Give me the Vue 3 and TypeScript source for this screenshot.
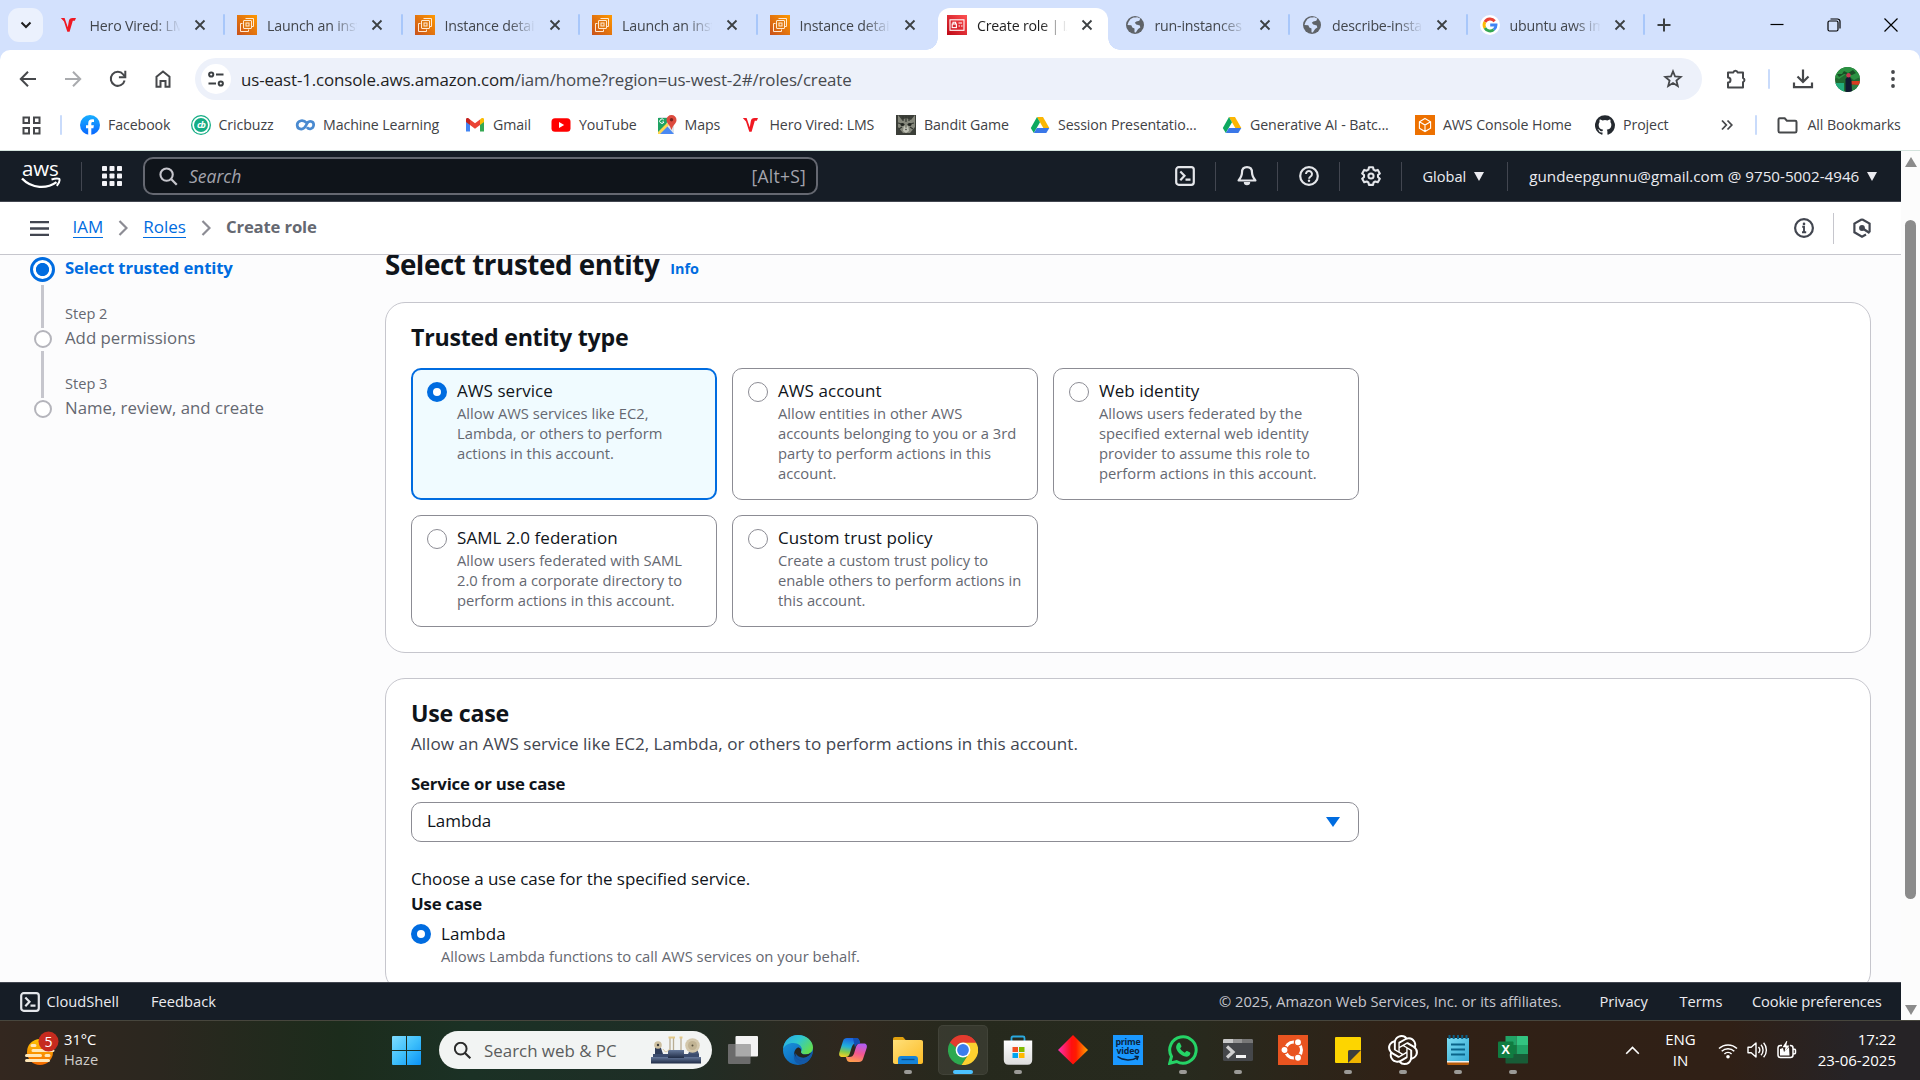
<script setup lang="ts">
interface Tab { icon: string; title: string; active?: boolean; sep?: boolean }
interface Bookmark { icon: string; label: string; width: number }
interface Entity { title: string; text: string; selected?: boolean }
interface App { id: string; open?: boolean; active?: boolean }

const tabs: Tab[] = [
  { icon: 'vired', title: 'Hero Vired: LMS', sep: true },
  { icon: 'ec2', title: 'Launch an instance', sep: true },
  { icon: 'ec2', title: 'Instance details', sep: true },
  { icon: 'ec2', title: 'Launch an instance', sep: true },
  { icon: 'ec2', title: 'Instance details' },
  { icon: 'iam', title: 'Create role | IAM', active: true },
  { icon: 'globe', title: 'run-instances —', sep: true },
  { icon: 'globe', title: 'describe-instances', sep: true },
  { icon: 'google', title: 'ubuntu aws image', sep: true },
]

const bookmarks: Bookmark[] = [
  { icon: 'facebook', label: 'Facebook', width: 110.5 },
  { icon: 'cricbuzz', label: 'Cricbuzz', width: 104.5 },
  { icon: 'ml', label: 'Machine Learning', width: 170 },
  { icon: 'gmail', label: 'Gmail', width: 86 },
  { icon: 'youtube', label: 'YouTube', width: 105.5 },
  { icon: 'maps', label: 'Maps', width: 85 },
  { icon: 'vired', label: 'Hero Vired: LMS', width: 154.5 },
  { icon: 'cat', label: 'Bandit Game', width: 134 },
  { icon: 'drive', label: 'Session Presentatio...', width: 192 },
  { icon: 'drive', label: 'Generative AI - Batc...', width: 193 },
  { icon: 'awscube', label: 'AWS Console Home', width: 180 },
  { icon: 'github', label: 'Project', width: 122 },
]

const entities: Entity[] = [
  { title: 'AWS service', text: 'Allow AWS services like EC2, Lambda, or others to perform actions in this account.', selected: true },
  { title: 'AWS account', text: 'Allow entities in other AWS accounts belonging to you or a 3rd party to perform actions in this account.' },
  { title: 'Web identity', text: 'Allows users federated by the specified external web identity provider to assume this role to perform actions in this account.' },
  { title: 'SAML 2.0 federation', text: 'Allow users federated with SAML 2.0 from a corporate directory to perform actions in this account.' },
  { title: 'Custom trust policy', text: 'Create a custom trust policy to enable others to perform actions in this account.' },
]

const apps: App[] = [
  { id: 'taskview' }, { id: 'edge' }, { id: 'copilot' }, { id: 'explorer', open: true },
  { id: 'chrome', active: true }, { id: 'store', open: true }, { id: 'diamond' }, { id: 'prime' },
  { id: 'whatsapp', open: true }, { id: 'terminal', open: true }, { id: 'ubuntu' }, { id: 'sticky', open: true },
  { id: 'chatgpt', open: true }, { id: 'notepad', open: true }, { id: 'excel', open: true },
]
</script>

<template>
  <svg class="defs" width="0" height="0" aria-hidden="true">
    <defs>
      <linearGradient id="gEc2" x1="0" y1="1" x2="1" y2="0"><stop offset="0" stop-color="#c8511b" /><stop offset="1" stop-color="#ff9900" /></linearGradient>
      <linearGradient id="gIam" x1="0" y1="1" x2="1" y2="0"><stop offset="0" stop-color="#bd0816" /><stop offset="1" stop-color="#ff5252" /></linearGradient>
      <linearGradient id="gFb" x1="0" y1="0" x2="0" y2="1"><stop offset="0" stop-color="#19afff" /><stop offset="1" stop-color="#0866ff" /></linearGradient>
      <linearGradient id="gWin" x1="0" y1="0" x2="1" y2="1"><stop offset="0" stop-color="#7fdcff" /><stop offset=".5" stop-color="#3fc0fb" /><stop offset="1" stop-color="#0a92f5" /></linearGradient>
      <linearGradient id="gHaze" x1="0" y1="0" x2="0" y2="1"><stop offset="0" stop-color="#ffc400" /><stop offset="1" stop-color="#f56a00" /></linearGradient>
      <linearGradient id="gEdgeTop" x1="0" y1="0" x2="1" y2=".6"><stop offset="0" stop-color="#2aa5e8" /><stop offset=".5" stop-color="#2fc7d0" /><stop offset="1" stop-color="#62dd52" /></linearGradient>
      <linearGradient id="gEdgeLow" x1="0" y1="0" x2=".8" y2="1"><stop offset="0" stop-color="#1b9de2" /><stop offset="1" stop-color="#0b5cb4" /></linearGradient>
      <linearGradient id="gCopL" x1=".5" y1="0" x2=".3" y2="1"><stop offset="0" stop-color="#1b62e0" /><stop offset=".45" stop-color="#21b0dc" /><stop offset=".75" stop-color="#86c94a" /><stop offset="1" stop-color="#f2cf28" /></linearGradient>
      <linearGradient id="gCopR" x1=".6" y1="0" x2=".3" y2="1"><stop offset="0" stop-color="#b45cf0" /><stop offset=".5" stop-color="#f4578f" /><stop offset="1" stop-color="#ffa04a" /></linearGradient>
      <linearGradient id="gFolder" x1="0" y1="0" x2="1" y2="1"><stop offset="0" stop-color="#ffe07a" /><stop offset="1" stop-color="#fcbb25" /></linearGradient>
      <linearGradient id="gDia" x1="0" y1="0" x2="1" y2="0"><stop offset="0" stop-color="#ff2fb4" /><stop offset=".45" stop-color="#ff1010" /><stop offset=".6" stop-color="#ff1a00" /><stop offset="1" stop-color="#ffa400" /></linearGradient>
      <linearGradient id="gStore" x1="0" y1="0" x2="0" y2="1"><stop offset="0" stop-color="#ffffff" /><stop offset="1" stop-color="#dcdcdc" /></linearGradient>
      <linearGradient id="gNote" x1="0" y1="0" x2="1" y2="1"><stop offset="0" stop-color="#7adcf2" /><stop offset="1" stop-color="#35a9d3" /></linearGradient>
      <linearGradient id="gMetal" x1="0" y1="0" x2="0" y2="1"><stop offset="0" stop-color="#65789a" /><stop offset="1" stop-color="#202c46" /></linearGradient>

      <symbol id="vired" viewBox="0 0 20 20"><path d="M.8 3h3.800l3.200 9.200L8.800 6.200C9.200 4 10.300 3 12.600 3H16l-1.200 2.700h-2L9.600 16.800H7.300L4 6.400z" fill="#f01822" /></symbol>
      <symbol id="ec2" viewBox="0 0 20 20"><rect width="20" height="20" fill="url(#gEc2)" /><g fill="none" stroke="#ffe9d2" stroke-width="1"><path d="M8.500 3.500h8v8h-2M5.500 8.500h-2v8h8v-2" /><rect x="6.500" y="5.500" width="8" height="8" rx=".4" fill="#e07a12" /><rect x="9" y="8" width="3" height="3" /></g></symbol>
      <symbol id="iam" viewBox="0 0 20 20"><rect width="20" height="20" fill="url(#gIam)" /><g fill="none" stroke="#fff" stroke-width="1.100"><rect x="3" y="4.800" width="14" height="10.500" /><rect x="5.200" y="9" width="4.200" height="3.600" /><path d="M6 9V7.200h2.600V9M11.500 8h3.500M11.500 11h1.500M14 11h1.500" /></g></symbol>
      <symbol id="globe" viewBox="0 0 20 20"><circle cx="10" cy="10" r="9" fill="#5f6368" /><path d="M8.500 2.500 5.500 4 3.500 7l-1 3 3.800.3 1 2.200 2.200 1v3.800l1.300.2 2.300-3.400 2.200-1.600-.5-2.100-3.500-.8-1.500-1.800 1.500-1.300 3-.8 1-2.200-3-1.300-2 .4z" fill="#d3e1fd" /></symbol>
      <symbol id="google" viewBox="0 0 20 20"><circle cx="10" cy="10" r="10" fill="#fff" /><g fill="none" stroke-width="2.900"><path d="M14.700 6.200A6 6 0 0 0 4.900 7" stroke="#ea4335" /><path d="M4.900 7a6 6 0 0 0 0 6" stroke="#fbbc04" /><path d="M4.900 13a6 6 0 0 0 8.900 1.700" stroke="#34a853" /><path d="M13.800 14.700A6 6 0 0 0 16 10H10.200" stroke="#4285f4" /></g></symbol>
      <symbol id="facebook" viewBox="0 0 20 20"><circle cx="10" cy="10" r="10" fill="url(#gFb)" /><path d="M8.200 19.900v-6.600H6V10.200h2.200V8.500c0-3 1.500-4.300 4-4.300.7 0 1.400.1 1.800.2v2.700h-1.300c-1 0-1.400.5-1.400 1.500v1.600h2.600l-.5 3.100h-2.100v6.600z" fill="#fff" /></symbol>
      <symbol id="cricbuzz" viewBox="0 0 20 20"><circle cx="10" cy="10" r="10" fill="#15ad85" /><circle cx="10" cy="10" r="8.700" fill="#fff" /><circle cx="10" cy="10" r="7" fill="#15ad85" /><text x="10" y="13.200" text-anchor="middle" font-family="Open Sans, sans-serif" font-size="9" font-weight="700" font-style="italic" letter-spacing="-.8" fill="#fff">cb</text></symbol>
      <symbol id="ml" viewBox="0 0 20 20"><path d="M11.800 8.200C10.500 6.700 8.500 5.300 6 5.800c-5.600 1.200-4.700 8.500.4 8.300 3.700-.2 4.200-3 5.600-5.500 2-3.800 7.200-2.300 6.600 1.800-.5 3.600-4.600 4.600-6.700 1.800" fill="none" stroke="#4a8ad0" stroke-width="2.700" /></symbol>
      <symbol id="gmail" viewBox="0 0 20 20"><path d="M1 16.500V6l4 3v7.500z" fill="#4285f4" /><path d="M15 16.500V9l4-3v10.500z" fill="#34a853" /><path d="M1 7V4.500C1 3 2.800 2.700 3.800 3.500L5 4.500v5.600z" fill="#c5221f" /><path d="M5 10.100V4.500l5 3.800 5-3.800v5.600l-5 3.700z" fill="#ea4335" /><path d="M15 10.100V4.500l1.200-1C17.200 2.700 19 3 19 4.500V7z" fill="#fbbc04" /></symbol>
      <symbol id="youtube" viewBox="0 0 20 20"><rect x=".5" y="3.300" width="19" height="13.400" rx="3.500" fill="#f00" /><path d="M8 7v6l5.200-3z" fill="#fff" /></symbol>
      <symbol id="maps" viewBox="0 0 20 20"><rect x="1" y="2" width="16" height="17" rx="1.500" fill="#dfe3e8" /><path d="M1 3h10l-2 8-8 7z" fill="#1ea362" /><path d="m2 19 8-8 7 8z" fill="#4a89f3" /><path d="m1 17 9-9 2 2-9 9H1z" fill="#ffd54f" /><path d="M14.500 0a5 5 0 0 1 5 5c0 3.500-3.300 4.500-5 10-1.700-5.500-5-6.500-5-10a5 5 0 0 1 5-5z" fill="#dd4b3e" /><circle cx="14.500" cy="4.800" r="1.700" fill="#7b231f" /><path d="M6.800 5A2.200 2.200 0 1 0 7 7H5.300" stroke="#fff" fill="none" /></symbol>
      <symbol id="cat" viewBox="0 0 20 20"><rect width="20" height="20" fill="#3c3f39" /><path d="m2 0 4 5 4-2 5 2 4-5v12l-5 6H7l-5-6z" fill="#85877b" /><path d="M7 1v5M10 1v6M13 1v5M2 8l4 1M18 8l-4 1M3 14l3-2M17 14l-3-2" stroke="#343832" stroke-width="1.200" /><ellipse cx="6.500" cy="9.500" rx="2" ry="1.500" fill="#222520" /><ellipse cx="13.500" cy="9.500" rx="2" ry="1.500" fill="#222520" /><path d="m8 10 2 4 2-4 1 6-3 2-3-2z" fill="#bfc1b5" /><path d="M9 14h2l-1 1.500z" fill="#32332e" /></symbol>
      <symbol id="drive" viewBox="0 0 20 20"><path d="M7 2h6l6.300 11h-6z" fill="#fbb604" /><path d="M7 2 .8 13l3 5L10 7.300z" fill="#0da960" /><path d="M6.900 13h12.400l-3 5H3.800z" fill="#3a77e8" /></symbol>
      <symbol id="awscube" viewBox="0 0 20 20"><rect width="20" height="20" fill="#ed7100" /><path d="m10 3.500 5.600 3.200v6.600L10 16.500l-5.600-3.200V6.700zM4.400 6.700 10 10l5.600-3.300M10 10v6.500" fill="none" stroke="#fff" stroke-width="1.100" /></symbol>
      <symbol id="github" viewBox="0 0 24 24"><path fill="#24292f" d="M12 .3a12 12 0 0 0-3.800 23.400c.6.100.8-.3.800-.6v-2.200c-3.300.7-4-1.400-4-1.400-.6-1.400-1.400-1.800-1.400-1.800-1-.7.100-.7.100-.7 1.200.1 1.900 1.200 1.900 1.200 1 1.800 2.800 1.300 3.500 1 .1-.8.400-1.300.7-1.600-2.600-.3-5.400-1.300-5.400-5.900 0-1.300.5-2.400 1.200-3.200-.1-.3-.5-1.500.1-3.200 0 0 1-.3 3.300 1.200a11.500 11.500 0 0 1 6 0c2.300-1.500 3.300-1.200 3.300-1.200.7 1.700.2 2.900.1 3.200.8.800 1.200 1.900 1.200 3.200 0 4.600-2.800 5.600-5.500 5.900.4.400.8 1.100.8 2.200v3.300c0 .3.200.7.800.6A12 12 0 0 0 12 .3" /></symbol>
      <symbol id="cshell" viewBox="0 0 20 20"><rect x="1.200" y="1.200" width="17.600" height="17.600" rx="2.500" fill="none" stroke="#e4e6ea" stroke-width="2.200" /><path d="m5.300 5.500 4.200 4.300-4.200 4.400M10.500 13.600h5" fill="none" stroke="#e4e6ea" stroke-width="2.200" /></symbol>
      <symbol id="lens" viewBox="0 0 20 20"><circle cx="8" cy="8" r="6.500" fill="none" stroke="currentColor" stroke-width="2.200" /><path d="m12.700 12.700 6 6" stroke="currentColor" stroke-width="2.400" /></symbol>
      <symbol id="close" viewBox="0 0 12 12"><path d="m1.500 1.500 9 9m0-9-9 9" stroke="currentColor" stroke-width="1.800" /></symbol>
    </defs>
  </svg>

  <div class="screen">
    <div class="tabstrip">
      <button class="tabsearch"><svg width="12" height="8" viewBox="0 0 12 8"><path d="m1.500 1.500 4.500 4.500 4.500-4.500" fill="none" stroke="#1f1f1f" stroke-width="2" /></svg></button>
      <div v-for="(t, i) in tabs" :key="i" class="tab" :class="{ active: t.active, sep: t.sep }">
        <svg class="fav"><use :href="'#' + t.icon" /></svg>
        <span class="tabtitle">{{ t.title }}</span>
        <svg class="tabclose"><use href="#close" /></svg>
      </div>
      <svg class="plus" width="14" height="14" viewBox="0 0 14 14"><path d="M7 .5v13M.5 7h13" stroke="#3c4043" stroke-width="2" /></svg>
      <div class="wincontrols">
        <svg width="14" height="14" viewBox="0 0 14 14"><path d="M.5 6.500h13" stroke="#000" stroke-width="1.200" /></svg>
        <svg width="14" height="14" viewBox="0 0 14 14"><g fill="none" stroke="#000" stroke-width="1.200"><rect x="1" y="3" width="10" height="10" rx="1.500" /><path d="M3.500 1h7a2.500 2.500 0 0 1 2.500 2.500v7" /></g></svg>
        <svg width="14" height="14" viewBox="0 0 14 14"><path d="m.5.5 13 13m0-13-13 13" stroke="#000" stroke-width="1.200" /></svg>
      </div>
    </div>

    <div class="browser">
      <div class="toolbar">
        <div class="navbtns">
          <svg width="20" height="20" viewBox="0 0 20 20"><path d="M18 10H3M10 2.800 2.800 10l7.200 7.200" fill="none" stroke="#46484b" stroke-width="2" /></svg>
          <svg width="20" height="20" viewBox="0 0 20 20"><path d="M2 10h15M10 2.800l7.200 7.200-7.200 7.200" fill="none" stroke="#a9abae" stroke-width="2" /></svg>
          <svg width="20" height="20" viewBox="0 0 20 20"><path d="M16.600 11.500A7 7 0 1 1 15.300 5.500L17 7.500" fill="none" stroke="#46484b" stroke-width="2" /><path d="M17.300 1.800v6.400h-6.400" fill="none" stroke="#46484b" stroke-width="2" /></svg>
          <svg width="20" height="20" viewBox="0 0 20 20"><path d="M3.500 7.800 10 2.500l6.500 5.300v10h-4V12h-5v5.800h-4z" fill="none" stroke="#46484b" stroke-width="2" /></svg>
        </div>
        <div class="omnibox">
          <span class="siteinfo"><svg width="18" height="18" viewBox="0 0 18 18"><g fill="none" stroke="#3c4043" stroke-width="2"><circle cx="4.200" cy="4.500" r="2.100" /><path d="M9 4.500h7.500M1.500 13.500H9" /><circle cx="13.800" cy="13.500" r="2.100" /></g></svg></span>
          <span class="url"><b>us-east-1.console.aws.amazon.com</b>/iam/home?region=us-west-2#/roles/create</span>
          <svg class="star" width="20" height="20" viewBox="0 0 20 20"><path d="m10 2.300 2.100 5.200 5.600.4-4.300 3.600 1.400 5.500L10 14l-4.800 3 1.400-5.500L2.300 7.900l5.600-.4z" fill="none" stroke="#46484b" stroke-width="1.800" /></svg>
        </div>
        <div class="toolright">
          <svg class="puzzle" width="22" height="22" viewBox="0 0 22 22"><path d="M3 4.500h5.300a2.200 2.200 0 0 1 4.300 0H18v5.600a2.100 2.100 0 0 1 0 4V19.500H3v-5a2.500 2.500 0 0 0 0-5z" fill="none" stroke="#46484b" stroke-width="2" stroke-linejoin="round" /></svg>
          <i class="vsep"></i>
          <svg width="22" height="22" viewBox="0 0 22 22"><path d="M11 1.500v12M5.500 8.500 11 14l5.500-5.500M2 14.500v4.700h18v-4.700" fill="none" stroke="#46484b" stroke-width="2.200" /></svg>
          <svg class="avatar" width="25" height="25" viewBox="0 0 25 25"><clipPath id="avclip"><circle cx="12.500" cy="12.500" r="12.500" /></clipPath><g clip-path="url(#avclip)"><rect width="25" height="25" fill="#1f6a30" /><path d="M0 0h25v10l-6 3-8-6-7 5-4-2z" fill="#2b9142" /><path d="M2 7h5l2-3 4 2 5-3 3 3-4 2-8-1-5 3z" fill="#174f25" /><path d="M16 14h9v4l-9-.5z" fill="#d83c22" /><path d="M0 16h9v9H0z" fill="#23ac7c" /><path d="M15 18h8l-2 5h-6z" fill="#2f7f45" /><path d="m10.500 12 2-2h2.500l1.500 3 .5 12h-6.500z" fill="#111a32" /><circle cx="13.500" cy="8.300" r="2.200" fill="#c83850" /></g></svg>
          <svg width="6" height="20" viewBox="0 0 6 20"><g fill="#46484b"><circle cx="3" cy="3" r="1.900" /><circle cx="3" cy="10" r="1.900" /><circle cx="3" cy="17" r="1.900" /></g></svg>
        </div>
      </div>

      <div class="bookmarks">
        <svg class="appsgrid" width="19" height="19" viewBox="0 0 19 19"><g fill="none" stroke="#46484b" stroke-width="2"><rect x="1.500" y="1.500" width="5.500" height="5.500" /><rect x="12" y="1.500" width="5.500" height="5.500" /><rect x="1.500" y="12" width="5.500" height="5.500" /><rect x="12" y="12" width="5.500" height="5.500" /></g></svg>
        <i class="vsep first"></i>
        <div v-for="b in bookmarks" :key="b.label" class="bm" :style="{ width: b.width + 'px' }"><svg class="fav"><use :href="'#' + b.icon" /></svg><span>{{ b.label }}</span></div>
        <svg class="more" width="12" height="12" viewBox="0 0 12 12"><path d="m1 1.500 4.300 4.500L1 10.500M6.500 1.500 10.800 6l-4.300 4.500" fill="none" stroke="#46484b" stroke-width="1.800" /></svg>
        <i class="vsep last"></i>
        <svg class="folder" width="21" height="17" viewBox="0 0 21 17"><path d="M1.500 14V2.500C1.500 1.800 2 1.300 2.700 1.300h5l2.200 2.400h8.300c.7 0 1.300.5 1.300 1.200V14c0 .8-.6 1.500-1.400 1.500H2.900c-.8 0-1.400-.7-1.400-1.500z" fill="none" stroke="#46484b" stroke-width="2" /></svg>
        <span>All Bookmarks</span>
      </div>
    </div>

    <div class="viewport">
      <div class="page">
        <header class="awsnav">
          <div class="awslogo"><span>aws</span><svg width="40" height="13" viewBox="0 0 40 13"><path d="M1 1.500c10 10.500 25 10.500 34.500 3.600" fill="none" stroke="#fff" stroke-width="2.400" /><path d="M30.500 2.500c3-1 6.500-1.300 7.800-.6.700 1.500-.5 4.500-2.500 7" fill="none" stroke="#fff" stroke-width="2" /></svg></div>
          <i class="navsep"></i>
          <svg class="services" width="20" height="20" viewBox="0 0 20 20"><g fill="#f3f3f7"><template v-for="y in 3" :key="y"><rect v-for="x in 3" :key="x" :x="(x - 1) * 7.5" :y="(y - 1) * 7.5" width="5" height="5" rx=".8" /></template></g></svg>
          <div class="searchbox"><svg width="19" height="19"><use href="#lens" /></svg><em>Search</em><span>[Alt+S]</span></div>
          <div class="navright">
            <svg class="nicon" width="20" height="20"><use href="#cshell" /></svg><i class="navsep"></i>
            <svg class="nicon" width="20" height="20" viewBox="0 0 20 20"><path d="M10 1.200c3.300 0 5 2.400 5 5.300 0 3.300 1 4.800 3.400 8H1.600C4 11.300 5 9.800 5 6.500c0-2.900 1.700-5.300 5-5.300z" fill="none" stroke="#e4e6ea" stroke-width="2.200" stroke-linejoin="round" /><path d="M6.800 16h6.400a3.200 3.200 0 0 1-6.400 0z" fill="#e4e6ea" /></svg><i class="navsep"></i>
            <svg class="nicon" width="20" height="20" viewBox="0 0 20 20"><circle cx="10" cy="10" r="8.800" fill="none" stroke="#e4e6ea" stroke-width="2.200" /><path d="M7 8a3 3 0 1 1 4.600 2.500c-1.100.7-1.500 1.100-1.500 2.200" fill="none" stroke="#e4e6ea" stroke-width="2" /><circle cx="10" cy="14.800" r="1.200" fill="#e4e6ea" /></svg><i class="navsep"></i>
            <svg class="nicon" width="20" height="20" viewBox="0 0 20 20"><path d="M8 1.200h4l.6 2.500 1.700 1 2.500-.8 2 3.500-1.800 1.700v2l1.800 1.700-2 3.500-2.500-.8-1.700 1-.6 2.400H8l-.6-2.400-1.700-1-2.500.8-2-3.500L3 11.100v-2L1.200 7.400l2-3.500 2.500.8 1.700-1z" fill="none" stroke="#e4e6ea" stroke-width="2.100" stroke-linejoin="round" /><circle cx="10" cy="10" r="2.600" fill="none" stroke="#e4e6ea" stroke-width="2" /></svg><i class="navsep"></i>
            <span class="menu region">Global<b class="caret"></b></span><i class="navsep"></i>
            <span class="menu account">gundeepgunnu@gmail.com @ 9750-5002-4946<b class="caret"></b></span>
          </div>
        </header>

        <nav class="crumbs">
          <svg class="burger" width="19" height="15" viewBox="0 0 19 15"><path d="M0 1.200h19M0 7.500h19M0 13.800h19" stroke="#424650" stroke-width="2.300" /></svg>
          <a class="iam">IAM</a>
          <svg class="chev" width="10" height="16" viewBox="0 0 10 16"><path d="m1.500 1 7 7-7 7" fill="none" stroke="#8c8c94" stroke-width="2.200" /></svg>
          <a>Roles</a>
          <svg class="chev" width="10" height="16" viewBox="0 0 10 16"><path d="m1.500 1 7 7-7 7" fill="none" stroke="#8c8c94" stroke-width="2.200" /></svg>
          <strong>Create role</strong>
          <div class="crumbright">
            <svg width="20" height="20" viewBox="0 0 20 20"><circle cx="10" cy="10" r="8.900" fill="none" stroke="#424650" stroke-width="2.200" /><circle cx="10" cy="5.900" r="1.300" fill="#424650" /><path d="M8.200 8.800H10v5.500M8 14.300h4.200" fill="none" stroke="#424650" stroke-width="1.900" /></svg>
            <i></i>
            <svg width="20" height="20" viewBox="0 0 20 20"><path d="m10 1.300 7.600 4.300v8.700M14 16.500l-4 2.200-7.600-4.400V5.600L10 1.300M17.600 14.300V11" fill="none" stroke="#424650" stroke-width="2.200" /><circle cx="10" cy="10" r="2.900" fill="#424650" /><path d="m10 10 7.600 5" stroke="#424650" stroke-width="2.400" /></svg>
          </div>
        </nav>

        <main class="content">
          <aside class="steps">
            <div class="rail"><i class="dot on"></i><i class="line a"></i><i class="dot"></i><i class="line b"></i><i class="dot"></i></div>
            <div class="steptext">
              <b>Select trusted entity</b>
              <small>Step 2</small><span>Add permissions</span>
              <small>Step 3</small><span>Name, review, and create</span>
            </div>
          </aside>
          <section class="form">
            <h1>Select trusted entity <a>Info</a></h1>
            <div class="panel first">
              <h2>Trusted entity type</h2>
              <div class="tiles">
                <label v-for="e in entities" :key="e.title" class="tile" :class="{ selected: e.selected }">
                  <i class="radio" :class="{ on: e.selected }"></i>
                  <span class="tiletext"><span class="tiletitle">{{ e.title }}</span><span class="tiledesc">{{ e.text }}</span></span>
                </label>
              </div>
            </div>
            <div class="panel second">
              <h2>Use case</h2>
              <p class="lead">Allow an AWS service like EC2, Lambda, or others to perform actions in this account.</p>
              <div class="label svc">Service or use case</div>
              <div class="select"><span>Lambda</span><i></i></div>
              <p class="choose">Choose a use case for the specified service.</p>
              <div class="label uc">Use case</div>
              <div class="option"><i class="radio on"></i><span class="tiletext"><span class="tiletitle">Lambda</span><span class="tiledesc">Allows Lambda functions to call AWS services on your behalf.</span></span></div>
            </div>
          </section>
        </main>

        <footer class="awsfoot">
          <svg width="20" height="20"><use href="#cshell" /></svg>
          <span class="cs">CloudShell</span><span class="fb">Feedback</span>
          <span class="copy">© 2025, Amazon Web Services, Inc. or its affiliates.</span>
          <span class="privacy">Privacy</span><span class="terms">Terms</span><span class="cookie">Cookie preferences</span>
        </footer>
      </div>
      <div class="scrollbar"><i class="up"></i><i class="thumb"></i><i class="down"></i></div>
    </div>

    <div class="taskbar">
      <div class="weather">
        <svg width="36" height="36" viewBox="0 0 36 36"><circle cx="15" cy="21" r="13" fill="url(#gHaze)" /><g stroke="#ffe7b8" stroke-width="3" stroke-linecap="round"><path d="M7 14.500h3M8 19.500h20M1.500 24.500h14M21 24.500h3M1.500 29.500h22" /></g><circle cx="23.500" cy="10.500" r="10" fill="#c62b1f" /><text x="23.500" y="15.500" text-anchor="middle" font-family="Open Sans, sans-serif" font-size="14" fill="#fff">5</text></svg>
        <div><span>31°C</span><span class="dim">Haze</span></div>
      </div>
      <svg class="winlogo" width="29" height="29" viewBox="0 0 29 29"><path d="M0 1a1 1 0 0 1 1-1h13v14H0zM15 0h13a1 1 0 0 1 1 1v13H15zM0 15h14v14H1a1 1 0 0 1-1-1zM15 15h14v13a1 1 0 0 1-1 1H15z" fill="url(#gWin)" /></svg>
      <div class="tsearch">
        <svg width="19" height="19"><use href="#lens" /></svg><span>Search web &amp; PC</span>
        <svg class="engine" width="50" height="28" viewBox="0 0 50 28"><rect x="0" y="21" width="50" height="6.500" fill="url(#gMetal)" /><path d="M2 18h46v3H2z" fill="#3b4c6e" /><path d="M4 9h5l3 9H4z" fill="#2e3c59" /><path d="M17 14h16v8H17z" fill="url(#gMetal)" /><path d="M19 14V1M22.500 14V1M30 14V1" stroke="#b9ad93" stroke-width="1.300" /><path d="M17.500 1.500h6.500M28.500 1.500h3" stroke="#e3c987" stroke-width="2" /><path d="M12 13c3 5 4 2 7 0" stroke="#d9c79c" fill="none" /><circle cx="7" cy="9" r="3.800" fill="#cdbf9f" /><circle cx="7" cy="9" r="1.200" fill="#3b3b3b" /><path d="m38 16 8-3 2 5H37z" fill="#465675" /><circle cx="41.500" cy="9.500" r="7.300" fill="#d3c7ab" /><circle cx="41.500" cy="9.500" r="4.500" fill="#c1b393" /><circle cx="41.500" cy="9.500" r="1" fill="#58503d" /></svg>
      </div>
      <div class="apps">
        <div v-for="a in apps" :key="a.id" class="app" :class="{ open: a.open, active: a.active }">
          <svg v-if="a.id === 'taskview'" width="30" height="30" viewBox="0 0 30 30"><rect x="7.500" y="1" width="22.500" height="20.500" rx="1" fill="#f3f3f3" /><rect x="0" y="9" width="22.500" height="20" rx="1" fill="#6b6b6b" /><path d="M7.500 9h15v12.500h-15z" fill="#aaa" /></svg>
          <svg v-else-if="a.id === 'edge'" width="30" height="30" viewBox="0 0 30 30"><circle cx="15" cy="15" r="15" fill="url(#gEdgeLow)" /><path d="M.2 14C1 5 7.500 0 15 0c8.500 0 15 6 15 12.500 0 4.500-3.500 7-7.300 7-3.200 0-5-1.200-4.700-2.600.6-1.200 1-2 .8-3.100C18.200 10.500 15 8.200 10.500 8 5.500 7.900 1.500 10.500.2 14z" fill="url(#gEdgeTop)" /><path d="M11 19.500c0-3.400 2-6.100 4.200-6.900 1.700.2 3.400 1.400 2.800 4.300-.3 1.400 1.500 2.600 4.700 2.600 2.500 0 5-1.100 6.400-3 .9 1.300-.6 5-3.300 8.100-2.500 2.500-6 3.700-9.200 2.300-3.500-1.200-5.600-4-5.600-7.400z" fill="#134f9c" /><path d="M11.300 18c.4-3 2.300-5 3.900-5.400 2.100.2 3.300 2 2.800 4.300-.4 1.400 1.500 2.600 4.700 2.600 2 0 4-.7 5.500-1.900-3 5.400-7.500 6.400-11 5.600-3.300-.7-6-2.300-5.900-5.200z" fill="#27251f" /><path d="M11.200 18.500c.3 4.500 4.300 7.300 8.300 7.300 3.500 0 6.500-1.500 8.500-4.500l-1.600 3.500c-3 4-9.400 6-13 3-2.500-2.200-3-6-2.200-9.300z" fill="#1359a7" /><path d="M12.500 18c1.500 3.700 6 5.200 9.500 4.500 2.800-.5 5-2.200 6.700-5.200.8 3.700-3.700 8.400-8.300 8.600-4.500.1-8.500-3.300-7.900-7.900z" fill="#1459a7" /></svg>
          <svg v-else-if="a.id === 'copilot'" width="30" height="30" viewBox="0 0 30 30"><path d="M9 3h9c2 0 3 1 3.500 3l.7 2.500h-4c-2.300 0-3.600 1-4.400 3.500l-2 6.500c-.8 2.500-2 3.500-4.500 3.500H4.500C1.500 22 .5 20 1.500 17L5 6c.8-2.200 2-3 4-3z" fill="url(#gCopL)" /><path d="M21 27h-9c-2 0-3-1-3.500-3L7.800 22h3.500c2.500 0 3.900-1 4.700-3.500l2-6.500c.8-2.500 2-3.500 4.500-3.500h3c3 0 4 2 3 5L25 24c-.8 2.200-2 3-4 3z" fill="url(#gCopR)" /><path d="M15 3h3c2 0 3 1 3.500 3l.8 2.500c-3.500 0-4.400 1.500-5.300 4.500z" fill="#124fb4" /></svg>
          <svg v-else-if="a.id === 'explorer'" width="30" height="30" viewBox="0 0 30 30"><path d="M0 4c0-1.200.8-2 2-2h8l3.500 4H0z" fill="#e0a00e" /><path d="M0 5h28c1.200 0 2 .8 2 2v20c0 1.200-.8 2-2 2H2c-1.200 0-2-.8-2-2z" fill="url(#gFolder)" /><path d="M5 29v-5c0-1.800 1.200-3 3-3h14c1.800 0 3 1.200 3 3v5z" fill="#1583d8" /><path d="M8.500 24.500h13" stroke="#095091" stroke-width="1.300" /></svg>
          <svg v-else-if="a.id === 'chrome'" width="30" height="30" viewBox="0 0 30 30"><path d="M15 15 2 7.500A15 15 0 0 1 28 7.500z" fill="#e33b2e" /><path d="M2 7.500A15 15 0 0 0 13.500 30L21 18.500z" fill="#2da94f" /><path d="M28 7.500A15 15 0 0 1 13.500 30l7.500-11.500L15 7.500z" fill="#fdd02f" /><path d="M2 7.500 9 19l6-4V7.500z" fill="#2da94f" /><path d="M2 7.500C7 .5 15-1 21 1.300c3 1.200 5.500 3.500 7 6.200H15a7.500 7.500 0 0 0-7 5z" fill="#e33b2e" /><circle cx="15" cy="15" r="7.400" fill="#fff" /><circle cx="15" cy="15" r="5.900" fill="#3b7ded" /></svg>
          <svg v-else-if="a.id === 'store'" width="30" height="30" viewBox="0 0 30 30"><path d="M8.500 7V3c0-1 .5-1.500 1.500-1.500h10c1 0 1.500.5 1.500 1.500v4" fill="none" stroke="#2aa9df" stroke-width="1.800" /><path d="M.8 5.500h28.400V25c0 3-1.700 4.700-4.700 4.700h-19c-3 0-4.700-1.700-4.700-4.700z" fill="url(#gStore)" /><path d="M9.500 12H15v5H9.500z" fill="#f25022" /><path d="M16 12h5.500v5H16z" fill="#7fba00" /><path d="M9.500 18H15v5H9.500z" fill="#00a4ef" /><path d="M16 18h5.500v5H16z" fill="#ffb900" /></svg>
          <svg v-else-if="a.id === 'diamond'" width="30" height="30" viewBox="0 0 30 30"><path d="M15 0 30 15 15 29.500 0 15z" fill="url(#gDia)" /></svg>
          <svg v-else-if="a.id === 'prime'" width="30" height="30" viewBox="0 0 30 30"><rect width="30" height="30" fill="#1a98ff" /><g font-family="Open Sans, sans-serif" font-size="8.800" font-weight="700" fill="#0b2440" text-anchor="middle" letter-spacing="-.2"><text x="15" y="10">prime<tspan x="15" dy="8.800">video</tspan></text></g><path d="M4.500 21.500c6 4.500 14.500 4.500 20 .8M21.500 21.300l3.600.3-1.200 3.300" fill="none" stroke="#0b2440" stroke-width="1.500" /></svg>
          <svg v-else-if="a.id === 'whatsapp'" width="30" height="30" viewBox="0 0 30 30"><path d="M1.700 28.300 3.500 21.500A13.200 13.200 0 1 1 8.600 26.500z" fill="none" stroke="#25d366" stroke-width="3" /><path d="M10 8c.8-.9 1.600-.7 2-.1l1.400 3c.2.500 0 1-1.300 2.400 1 2 2.500 3.500 4.700 4.400 1.400-1.700 1.700-1.900 2.300-1.600l3 1.500c.5.300.4 2-1 3.200-2 1.600-4.500 1-7.500-.7-3-1.900-5-4.900-5.400-6.800-.4-2.300.7-4.200 1.800-5.300z" fill="#25d366" /></svg>
          <svg v-else-if="a.id === 'terminal'" width="30" height="30" viewBox="0 0 30 30"><rect x="0" y="4" width="30" height="22" rx="1.500" fill="#45474a" /><path d="M1.500 4h27c.8 0 1.500.6 1.500 1.500V8H0V5.500C0 4.600.7 4 1.500 4z" fill="#777" /><path d="M1.500 4H10v4H0V5.500C0 4.600.7 4 1.500 4z" fill="#c9c9c9" /><path d="M10 4h9v4h-9z" fill="#969696" /><path d="m4 11.500 6 5.500-6 5.500" fill="none" stroke="#d0d0d0" stroke-width="3.200" /><path d="M13 21.500h10" stroke="#f4f4f4" stroke-width="3" /></svg>
          <svg v-else-if="a.id === 'ubuntu'" width="30" height="30" viewBox="0 0 30 30"><rect width="30" height="30" fill="#e95420" /><circle cx="15.500" cy="15" r="8" fill="none" stroke="#fff" stroke-width="3" /><g fill="#fff" stroke="#e95420" stroke-width="1.300"><circle cx="6.500" cy="15" r="3.600" /><circle cx="20" cy="7.300" r="3.600" /><circle cx="20" cy="22.700" r="3.600" /></g></svg>
          <svg v-else-if="a.id === 'sticky'" width="30" height="30" viewBox="0 0 30 30"><rect x="2" y="2" width="26" height="26" rx="1" fill="#fdd500" /><path d="M15 15h13v13H15z" fill="#f0b400" /><path d="M15 28V17c0-1.300.7-2 2-2h11z" fill="#3d3d3d" /></svg>
          <svg v-else-if="a.id === 'chatgpt'" width="30" height="30" viewBox="0 0 24 24"><path fill="#fff" d="M22.2819 9.8211a5.9847 5.9847 0 0 0-.5157-4.9108 6.0462 6.0462 0 0 0-6.5098-2.9A6.0651 6.0651 0 0 0 4.9807 4.1818a5.9847 5.9847 0 0 0-3.9977 2.9 6.0462 6.0462 0 0 0 .7427 7.0966 5.98 5.98 0 0 0 .511 4.9107 6.051 6.051 0 0 0 6.5146 2.9001A5.9847 5.9847 0 0 0 13.2599 24a6.0557 6.0557 0 0 0 5.7718-4.2058 5.9894 5.9894 0 0 0 3.9977-2.9001 6.0557 6.0557 0 0 0-.7475-7.0729zm-9.022 12.6081a4.4755 4.4755 0 0 1-2.8764-1.0408l.1419-.0804 4.7783-2.7582a.7948.7948 0 0 0 .3927-.6813v-6.7369l2.02 1.1686a.071.071 0 0 1 .038.052v5.5826a4.504 4.504 0 0 1-4.4945 4.4944zm-9.6607-4.1254a4.4708 4.4708 0 0 1-.5346-3.0137l.142.0852 4.783 2.7582a.7712.7712 0 0 0 .7806 0l5.8428-3.3685v2.3324a.0804.0804 0 0 1-.0332.0615L9.74 19.9502a4.4992 4.4992 0 0 1-6.1408-1.6464zM2.3408 7.8956a4.485 4.485 0 0 1 2.3655-1.9728V11.6a.7664.7664 0 0 0 .3879.6765l5.8144 3.3543-2.0201 1.1685a.0757.0757 0 0 1-.071 0l-4.8303-2.7865A4.504 4.504 0 0 1 2.3408 7.872zm16.5963 3.8558L13.1038 8.364 15.1192 7.2a.0757.0757 0 0 1 .071 0l4.8303 2.7913a4.4944 4.4944 0 0 1-.6765 8.1042v-5.6772a.79.79 0 0 0-.407-.667zm2.0107-3.0231l-.142-.0852-4.7735-2.7818a.7759.7759 0 0 0-.7854 0L9.409 9.2297V6.8974a.0662.0662 0 0 1 .0284-.0615l4.8303-2.7866a4.4992 4.4992 0 0 1 6.6802 4.66zM8.3065 12.863l-2.02-1.1638a.0804.0804 0 0 1-.038-.0567V6.0742a4.4992 4.4992 0 0 1 7.3757-3.4537l-.142.0805L8.704 5.459a.7948.7948 0 0 0-.3927.6813zm1.0976-2.3654l2.602-1.4998 2.6069 1.4998v2.9994l-2.5974 1.4997-2.6067-1.4997Z" /></svg>
          <svg v-else-if="a.id === 'notepad'" width="30" height="30" viewBox="0 0 30 30"><path d="M4 25h22v3.500c0 .8-.5 1.500-1.500 1.500h-19C4.500 30 4 29.300 4 28.500z" fill="#b85d0c" /><path d="M4 24h22v3.500H4z" fill="#f1f1f1" /><path d="M4 3h22v23H4z" fill="url(#gNote)" /><path d="M6.500 0v4M10.700 0v4M15 0v4M19.200 0v4M23.500 0v4" stroke="#0c5f85" stroke-width="2" /><path d="M8 9.500h14M8 14.500h14M8 19.500h14" stroke="#0a6489" stroke-width="1.800" /></svg>
          <svg v-else width="30" height="30" viewBox="0 0 30 30"><path d="M7.500 1h11v9h-11z" fill="#21a366" /><path d="M18.500 1H29c.6 0 1 .4 1 1v8H18.500z" fill="#33c481" /><path d="M7.500 10h11v9h-11z" fill="#107c41" /><path d="M18.500 10H30v9H18.500z" fill="#21a366" /><path d="M7.500 19H30v8.500c0 .6-.4 1-1 1H8.500c-.6 0-1-.4-1-1z" fill="#185c37" /><rect x="0" y="6.500" width="15.500" height="16.500" rx="1" fill="#107c41" /><text x="7.700" y="19.300" text-anchor="middle" font-family="Open Sans, sans-serif" font-size="12.500" font-weight="700" fill="#fff">X</text></svg>
        </div>
      </div>
      <div class="tray">
        <svg class="up" width="15" height="9" viewBox="0 0 15 9"><path d="m1.200 7.800 6.300-6.300 6.300 6.300" fill="none" stroke="#fff" stroke-width="1.600" /></svg>
        <div class="lang"><span>ENG</span><span>IN</span></div>
        <svg class="wifi" width="20" height="17" viewBox="0 0 20 17"><g fill="none" stroke="#fff" stroke-width="1.500"><path d="M1 6.500a13 13 0 0 1 18 0M3.700 9.300a9.200 9.200 0 0 1 12.600 0M6.400 12a5.300 5.300 0 0 1 7.200 0" /></g><circle cx="10" cy="14.800" r="1.800" fill="#fff" /></svg>
        <svg class="vol" width="21" height="18" viewBox="0 0 21 18"><g fill="none" stroke="#fff" stroke-width="1.400"><path d="M1 6.200h3.200L9 2v14l-4.800-4.200H1z" stroke-linejoin="round" /><path d="M11.500 6a4.500 4.500 0 0 1 0 6M14 3.800a7.600 7.600 0 0 1 0 10.400M16.600 1.700a11 11 0 0 1 0 14.600" /></g></svg>
        <svg class="bat" width="20" height="18" viewBox="0 0 20 18"><path d="M5 4.500H3.500C2 4.500 1 5.500 1 7v7c0 1.500 1 2.500 2.500 2.500h10c1.500 0 2.500-1 2.500-2.500V7c0-1.500-1-2.500-2.500-2.500H13M16.500 8c1.300 0 2 .6 2 1.500v2c0 .9-.7 1.500-2 1.500" fill="none" stroke="#fff" stroke-width="1.500" /><path d="M3 8l3-1 1 4 5-5 .5 8.500H3z" fill="#fff" /><path d="m9.500 0-4 6.300h3L7.500 11l5-6.500H9.300l1-4.500z" fill="#fff" /></svg>
        <div class="clock"><span>17:22</span><span>23-06-2025</span></div>
      </div>
    </div>
  </div>
</template>

<style>
html, body { margin: 0; overflow: hidden; }
</style>

<style scoped>
* { box-sizing: border-box; }
svg { display: block; flex: none; }
.defs { position: absolute; }
.screen { width: 1920px; height: 1080px; display: flex; flex-direction: column; overflow: hidden; background: #d3e1fd; font-family: "Open Sans", "Noto Sans", sans-serif; color: #0f141a; }
.fav { width: 20px; height: 20px; }

.tabstrip { position: relative; z-index: 2; height: 50px; background: #d3e1fd; display: flex; align-items: center; flex: none; }
.tabsearch { width: 35px; height: 34px; margin: 0 3.5px 0 8px; border: 0; padding: 0; border-radius: 11px; background: #ebf1fd; display: flex; align-items: center; justify-content: center; }
.tab { position: relative; width: 177.5px; height: 42px; margin-top: 8px; padding: 0 0 8px 13px; display: flex; align-items: center; flex: none; }
.tab.sep::after { content: ""; position: absolute; right: -1px; top: 6px; width: 2px; height: 21px; background: #a8c7fa; border-radius: 1px; }
.tab.active { z-index: 1; }
.tab.active::before { content: ""; position: absolute; inset: 0 4px; background: #fff; border-radius: 12px 12px 0 0; }
.tab.active::after { content: ""; position: absolute; left: -8px; right: -8px; bottom: 0; height: 12px; background: radial-gradient(circle at 0 0, transparent 11.5px, #fff 12px) left / 12px 12px no-repeat, radial-gradient(circle at 100% 0, transparent 11.5px, #fff 12px) right / 12px 12px no-repeat; }
.tab > * { position: relative; z-index: 1; }
.tabtitle { width: 90px; margin: 1px 0 0 10px; font-size: 14.2px; letter-spacing: -.2px; line-height: 20px; white-space: nowrap; overflow: hidden; color: #42464c; mask-image: linear-gradient(90deg, #000 64px, transparent 91px); }
.active .tabtitle { color: #1f1f1f; }
.tabclose { width: 12px; height: 12px; margin-left: 14px; color: #3c4043; }
.plus { margin-left: 13px; }
.wincontrols { display: flex; gap: 43px; margin-left: auto; padding-right: 22px; }

.browser { height: 101px; background: #fff; flex: none; border-bottom: 1px solid #d3e3dd; border-radius: 10px 10px 0 0; }
.toolbar { display: flex; align-items: center; height: 58px; }
.navbtns { display: flex; gap: 25px; width: 195px; padding-left: 17.5px; flex: none; }
.omnibox { width: 1507px; height: 42px; border-radius: 21px; background: #edf1fa; display: flex; align-items: center; padding-left: 6px; flex: none; }
.siteinfo { width: 30px; height: 30px; border-radius: 50%; background: #fff; display: flex; align-items: center; justify-content: center; }
.url { margin-left: 10px; font-size: 16.9px; letter-spacing: -.12px; color: #474a4f; }
.url b { font-weight: 400; color: #1f1f1f; }
.star { margin-left: auto; margin-right: 19.5px; }
.toolright { display: flex; align-items: center; }
.puzzle { margin-left: 23px; }
.vsep { width: 2px; height: 20px; background: #c9dbfb; border-radius: 1px; flex: none; }
.toolright .vsep { margin: 0 21.5px 0 21px; }
.avatar { margin: 0 30px 0 21.5px; }
.bookmarks { display: flex; align-items: center; height: 34px; padding-left: 22px; font-size: 14.2px; letter-spacing: -.1px; color: #3f4246; white-space: nowrap; }
.bookmarks span { margin-top: -2px; }
.vsep.first { margin: 0 18px 0 19px; }
.bm { display: flex; align-items: center; gap: 8px; flex: none; }
.more { margin-left: 4px; }
.vsep.last { margin: 0 20px 0 22px; }
.folder { margin-right: 9.5px; }

.viewport { height: 869px; display: flex; flex: none; background: #fcfcfc; }
.page { width: 1901px; display: flex; flex-direction: column; }
.awsnav { height: 51px; background: #161d26; border-bottom: 1px solid #424650; display: flex; align-items: center; flex: none; }
.awslogo { width: 40px; height: 28px; margin: 0 20px 0 21px; display: flex; flex-direction: column; color: #fff; }
.awslogo span { height: 15px; padding-left: 1px; font-size: 20.5px; line-height: 12px; font-weight: 500; letter-spacing: -.1px; }
.navsep { width: 1px; height: 29px; background: #424650; flex: none; }
.services { margin: 0 21px 0 20px; }
.searchbox { width: 675px; height: 38px; border: 2px solid #656871; border-radius: 10px; background: #0f141a; display: flex; align-items: center; padding: 0 10px 0 14px; color: #c6c6cd; font-size: 17.5px; flex: none; }
.searchbox em { margin: -1px 0 0 11px; color: #a4a4ad; }
.searchbox span { margin: -1px 0 0 auto; color: #a4a4ad; letter-spacing: .25px; }
.navright { display: flex; align-items: center; margin-left: 357px; }
.nicon { margin: 0 20.5px; }
.nicon:first-child { margin: 0 20px 0 0; }
.menu { display: flex; align-items: center; color: #ebebf0; font-weight: 500; white-space: nowrap; }
.region { margin: 0 23.5px 0 20.5px; font-size: 14.6px; }
.account { margin-left: 21px; font-size: 15.2px; }
.caret { margin-left: 7.5px; border: 5px solid transparent; border-top: 9px solid #ebebf0; border-bottom: 0; }

.crumbs { height: 53px; background: #fff; border-bottom: 1px solid #c6c6cd; display: flex; align-items: center; font-size: 17px; line-height: 22px; flex: none; padding-left: 29.5px; }
.crumbs a { color: #006ce0; border-bottom: 1px solid #006ce0; height: 22px; margin-top: -2px; }
.crumbs a.iam { margin-left: 24px; }
.crumbs strong { color: #656871; font-size: 16.7px; letter-spacing: -.15px; margin-top: -3px; }
.chev { margin: 0 15px; }
.crumbright { display: flex; align-items: center; margin-left: auto; padding-right: 29px; }
.crumbright i { width: 1px; height: 31px; background: #c6c6cd; margin: 0 18px 0 19px; }

.content { height: 727px; background: #fcfcfd; overflow: hidden; display: flex; flex: none; }
.steps { width: 385px; display: flex; padding-left: 30px; flex: none; }
.rail { width: 25px; display: flex; flex-direction: column; align-items: center; padding-top: 2px; }
.dot { width: 18px; height: 18px; border: 2.5px solid #b4b4bb; border-radius: 50%; flex: none; background: #fff; }
.dot.on { width: 25px; height: 25px; border: 3px solid #006ce0; background: radial-gradient(circle, #006ce0 6.2px, #fff 6.9px); }
.line { width: 3px; background: #c6c6cd; flex: none; }
.line.a { height: 43px; margin: 3px 0 2px; }
.line.b { height: 47px; margin: 3px 0 2px; }
.steptext { margin-left: 10px; display: flex; flex-direction: column; font-size: 16.8px; line-height: 24px; color: #656871; white-space: nowrap; padding-top: 1px; }
.steptext b { color: #006ce0; font-size: 16.8px; letter-spacing: -.16px; }
.steptext small { font-size: 14.6px; margin-top: 21px; }
.steptext small + span { margin-top: 1px; }
.form { width: 1486px; flex: none; }
h1 { margin: -11px 0 0; height: 58px; font-size: 27.8px; letter-spacing: -.43px; line-height: 40px; white-space: nowrap; }
h1 a { color: #006ce0; font-size: 14.4px; letter-spacing: 0; margin-left: 4px; position: relative; top: -1px; }
.panel { border: 1px solid #c6c6cd; border-radius: 20px; background: #fff; padding: 0 25px; }
.panel.first { height: 351px; }
h2 { margin: 17px 0 1px; font-size: 23.2px; letter-spacing: -.25px; line-height: 34px; }
.panel.second { margin-top: 25px; height: 314px; }
.tiles { display: grid; grid-template-columns: repeat(3, 306px); grid-template-rows: 132px 112px; gap: 15px; margin-top: 14px; }
.tile { border: 1px solid #8c8c94; border-radius: 10px; display: flex; padding: 12px 15px 0 15px; background: #fff; }
.tile.selected { border: 2px solid #006ce0; background: #f0fbff; padding: 11px 14px 0 14px; }
.radio { width: 20px; height: 20px; border: 1.5px solid #8c8c94; border-radius: 50%; flex: none; background: #fff; margin-top: 1px; }
.radio.on { border: 6.5px solid #006ce0; }
.tiletext { margin-left: 10px; display: flex; flex-direction: column; }
.tiletitle { font-size: 17px; line-height: 20px; height: 22px; letter-spacing: .06px; }
.tiledesc { font-size: 14.75px; line-height: 20px; color: #656871; }
.lead { margin: 0; font-size: 17.1px; line-height: 26px; color: #424650; }
.label { font-weight: 700; font-size: 16.8px; letter-spacing: -.17px; line-height: 24px; }
.label.svc { margin-top: 15px; }
.select { width: 948px; height: 40px; margin-top: 6px; border: 1px solid #8c8c94; border-radius: 10px; display: flex; align-items: center; justify-content: space-between; padding: 0 18px 0 15px; font-size: 17px; }
.select span { margin-top: -4px; }
.select i { border: 7px solid transparent; border-top: 10px solid #006ce0; border-bottom: 0; }
.choose { margin: 25px 0 0; font-size: 17px; line-height: 24px; letter-spacing: -.06px; }
.label.uc { margin-top: 1px; }
.option { display: flex; margin-top: 7px; }
.option .tiletitle { line-height: 22px; height: 23px; }
.option .tiledesc { font-size: 14.8px; }

.awsfoot { height: 38px; background: #161d26; border-top: 1px solid #424650; display: flex; align-items: center; color: #ebebf0; font-size: 14.7px; line-height: 20px; white-space: nowrap; flex: none; padding-left: 20px; }
.awsfoot span { font-weight: 500; margin-top: -1px; }
.awsfoot .cs { width: 104.5px; margin-left: 6.5px; }
.fb { width: 1068px; }
.awsfoot .copy { width: 380.5px; color: #c6c6cd; font-weight: 400; }
.privacy { width: 80px; }
.terms { width: 72.5px; }
.cookie { letter-spacing: -.15px; }
.scrollbar { width: 19px; display: flex; flex-direction: column; align-items: center; }
.scrollbar i { flex: none; }
.scrollbar .up { margin-top: 6px; border: 6px solid transparent; border-bottom: 10px solid #8b8b8b; border-top: 0; }
.thumb { width: 11px; height: 679px; margin-top: 53px; border-radius: 6px; background: #8b8b8b; }
.scrollbar .down { margin-top: 106px; border: 6px solid transparent; border-top: 10px solid #8b8b8b; border-bottom: 0; }

.taskbar { height: 60px; flex: none; border-top: 1px solid #47463d; padding-bottom: 1px; display: flex; align-items: center; color: #fff; background: linear-gradient(90deg, #33271f 0, #2b271f 160px, #1c2c1c 340px, #1b3125 470px, #1e2e26 660px, #2f271e 850px, #26291d 960px, #272a1e 1180px, #302116 1400px, #302016 1730px, #262326 1850px, #262326 1920px); }
.weather { display: flex; width: 392px; padding-left: 25px; font-size: 14.7px; line-height: 20px; }
.weather svg { margin-top: -1px; }
.weather div { margin: -3px 0 0 3px; display: flex; flex-direction: column; }
.dim { color: #cfcdca; }
.tsearch { width: 273px; height: 38px; margin-left: 18px; border-radius: 19px; background: #f2f4f3; display: flex; align-items: center; padding: 0 11px 0 14px; color: #2b2b2b; flex: none; }
.tsearch span { margin-left: 12px; font-size: 16.9px; color: #5b5d5c; white-space: nowrap; }
.tsearch svg:first-child { transform: scale(.95); }
.engine { margin-left: auto; }
.apps { display: flex; gap: 5px; margin-left: 6px; }
.app { position: relative; width: 50px; height: 50px; border-radius: 5px; display: flex; align-items: center; justify-content: center; }
.app.active { background: rgba(255, 255, 255, .08); box-shadow: inset 0 0 0 1px rgba(255, 255, 255, .05); }
.app.open::after, .app.active::after { content: ""; position: absolute; bottom: 1px; left: 21px; width: 8px; height: 4px; border-radius: 2px; background: #9b9a97; }
.app.active::after { left: 15px; width: 20px; background: #4cc2ff; }
.tray { display: flex; align-items: center; margin-left: auto; padding-right: 24px; font-size: 15px; line-height: 20.5px; }
.lang { width: 32px; margin: -1px 21px 0 25px; display: flex; flex-direction: column; align-items: center; }
.vol { margin-left: 9.5px; }
.bat { margin-left: 9px; }
.clock { width: 80px; margin: -1px 0 0 19px; display: flex; flex-direction: column; align-items: flex-end; }
</style>
